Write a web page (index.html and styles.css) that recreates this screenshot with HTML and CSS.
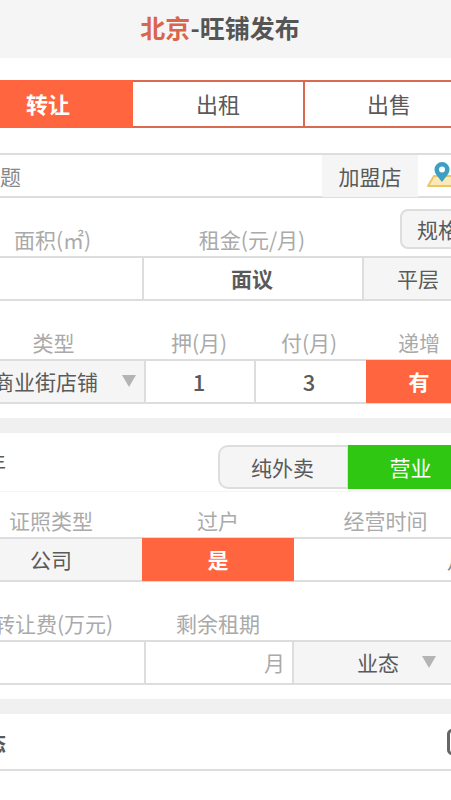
FILE: index.html
```html
<!DOCTYPE html>
<html lang="zh">
<head>
<meta charset="utf-8">
<title>北京-旺铺发布</title>
<link rel="stylesheet" href="styles.css">
</head>
<body>
<div class="page">
  <header class="head"><span class="city">北京</span>-旺铺发布</header>

  <div class="tabs">
    <div class="tab on">转让</div>
    <div class="tab">出租</div>
    <div class="tab">出售</div>
  </div>

  <div class="row title-row">
    <div class="ph">标题</div>
    <div class="cell soft">加盟店</div>
    <div class="cell map">
      <svg width="36" height="30" viewBox="0 0 36 30">
        <path d="M10 15H28L33 25H4Z" fill="#fbeab8" stroke="#eac766" stroke-width="2" stroke-linejoin="round"/>
        <path d="M18 21C13.500 15 10.500 12.500 10.500 8.500A7.500 7.500 0 0 1 25.500 8.500C25.500 12.500 22.500 15 18 21Z" fill="#3d9fc4"/>
        <circle cx="18" cy="8.500" r="3" fill="#fff"/>
      </svg>
    </div>
  </div>

  <div class="labels c-a">
    <div class="lab">面积(㎡)</div>
    <div class="lab">租金(元/月)</div>
    <div class="spec-wrap"><div class="spec">规格</div></div>
  </div>
  <div class="row c-a">
    <div class="cell"></div>
    <div class="cell bold sep pad-s">面议</div>
    <div class="cell soft sep pad-r">平层</div>
  </div>

  <div class="labels c-b">
    <div class="lab">类型</div>
    <div class="lab">押(月)</div>
    <div class="lab">付(月)</div>
    <div class="lab pad-t">递增</div>
  </div>
  <div class="row c-b">
    <div class="cell soft select"><span>商业街店铺</span><i class="arrow"></i></div>
    <div class="cell num sep pad-s">1</div>
    <div class="cell num sep pad-s">3</div>
    <div class="cell orange sep-w pad-r">有</div>
  </div>
  <div class="band"></div>

  <div class="biz">
    <div class="biz-name">营业年</div>
    <div class="toggle">
      <div class="tg soft">纯外卖</div>
      <div class="tg green">营业</div>
    </div>
  </div>

  <div class="labels c-c short">
    <div class="lab pad-m">证照类型</div>
    <div class="lab">过户</div>
    <div class="lab">经营时间</div>
  </div>
  <div class="row c-c">
    <div class="cell soft pad-m">公司</div>
    <div class="cell orange">是</div>
    <div class="cell right">月</div>
  </div>

  <div class="labels c-d">
    <div class="lab">转让费(万元)</div>
    <div class="lab">剩余租期</div>
    <div class="lab"></div>
  </div>
  <div class="row c-d">
    <div class="cell"></div>
    <div class="cell sep unit">月</div>
    <div class="cell soft sep select2"><span>业态</span><i class="arrow"></i></div>
  </div>
  <div class="band"></div>

  <div class="foot">
    <div class="foot-name">状态</div>
    <div class="check"></div>
  </div>
</div>
</body>
</html>
```
FILE: styles.css
```css
* { box-sizing: border-box; }
html, body { margin: 0; height: 800px; overflow: hidden; background: #fff; }
body { font-family: "Noto Sans CJK SC", "Noto Sans", sans-serif; color: #5a5a5a; }
.page { width: 514px; margin-left: -37px; font-size: 21px; }

.head { height: 58px; background: #f5f5f5; text-align: center; line-height: 55px; font-size: 25px; font-weight: 700; color: #555; }
.city { color: #d9664a; }

.tabs { display: grid; grid-template-columns: 170px 170px 174px; height: 48px; margin-top: 22px; border-top: 2px solid #d9694f; border-bottom: 2px solid #d9694f; font-size: 22px; }
.tab { display: flex; align-items: center; justify-content: center; padding-bottom: 2px; border-left: 2px solid #d9694f; }
.tab:first-child { border-left: 0; }
.tab:nth-child(2) { border-left: 0; }
.tab:nth-child(3) { padding-right: 4px; }
.tab.on { background: #ff6640; color: #fff; font-weight: 700; margin: -2px 0; }

.row { display: grid; height: 45px; border-top: 2px solid #ddd; border-bottom: 2px solid #ddd; }
.cell { display: flex; align-items: center; justify-content: center; min-width: 0; padding-bottom: 1px; }
.soft { background: #f5f5f5; }
.bold { font-weight: 700; }
.sep { border-left: 2px solid #ddd; }
.sep-w { margin-left: 2px; }
.pad-r { padding-right: 5px; }
.pad-t { padding-right: 3px; }
.pad-s { padding-right: 2px; }
.pad-m { padding-right: 3px; }
.orange { background: #ff6640; color: #fff; font-weight: 700; margin-top: -1px; margin-bottom: -1px; }

.title-row { grid-template-columns: 359px 96px 59px; margin-top: 25px; }
.ph { padding-left: 16px; color: #888; line-height: 42px; }
.map { justify-content: flex-start; padding-left: 6px; }

.labels { display: grid; align-items: end; height: 58px; padding-bottom: 2px; }
.labels.short { height: 45px; }
.lab { text-align: center; font-size: 21px; line-height: 30px; color: #aaa; }

.spec-wrap { display: flex; align-self: start; padding-top: 11px; padding-left: 38px; }
.spec { width: 110px; height: 40px; border: 2px solid #ddd; border-radius: 8px; background: #f5f5f5; line-height: 36px; padding-left: 15px; color: #5a5a5a; }

.c-a { grid-template-columns: 179px 220px 115px; }
.c-b { grid-template-columns: 181px 110px 110px 113px; }
.c-c { grid-template-columns: 179px 152px 183px; }
.c-d { grid-template-columns: 181px 148px 185px; }

.select { justify-content: flex-start; padding-left: 30px; gap: 24px; }
.select2 { justify-content: flex-start; padding-left: 63px; gap: 23px; }
.arrow { width: 0; height: 0; border-left: 7px solid transparent; border-right: 7px solid transparent; border-top: 12px solid #b4b4b4; }
.num { font-weight: 500; font-size: 22px; }
.right { justify-content: flex-end; padding-right: 9px; color: #888; }
.unit { justify-content: flex-end; padding-right: 7px; color: #aaa; }

.band { height: 15px; margin-top: 14px; background: #f0f0f0; }

.biz { display: flex; align-items: center; justify-content: space-between; height: 59px; border-bottom: 1px solid #f5f5f5; }
.biz-name { margin-left: -20px; flex: none; }
.toggle { display: grid; grid-template-columns: 129px 130px; height: 44px; margin-top: 9px; }
.tg { display: flex; align-items: center; justify-content: center; }
.tg.soft { border: 2px solid #ddd; border-right: 0; border-radius: 10px 0 0 10px; padding-right: 2px; }
.tg.green { background: #2fc712; color: #fff; padding-right: 4px; border-left: 1px solid #ddd; }

.foot { display: flex; align-items: center; justify-content: space-between; height: 57px; border-bottom: 2px solid #ddd; font-weight: 700; }
.foot-name { margin-left: 1px; }
.check { width: 26px; height: 26px; margin-right: 4px; border: 3px solid #666; border-radius: 5px; }
```
